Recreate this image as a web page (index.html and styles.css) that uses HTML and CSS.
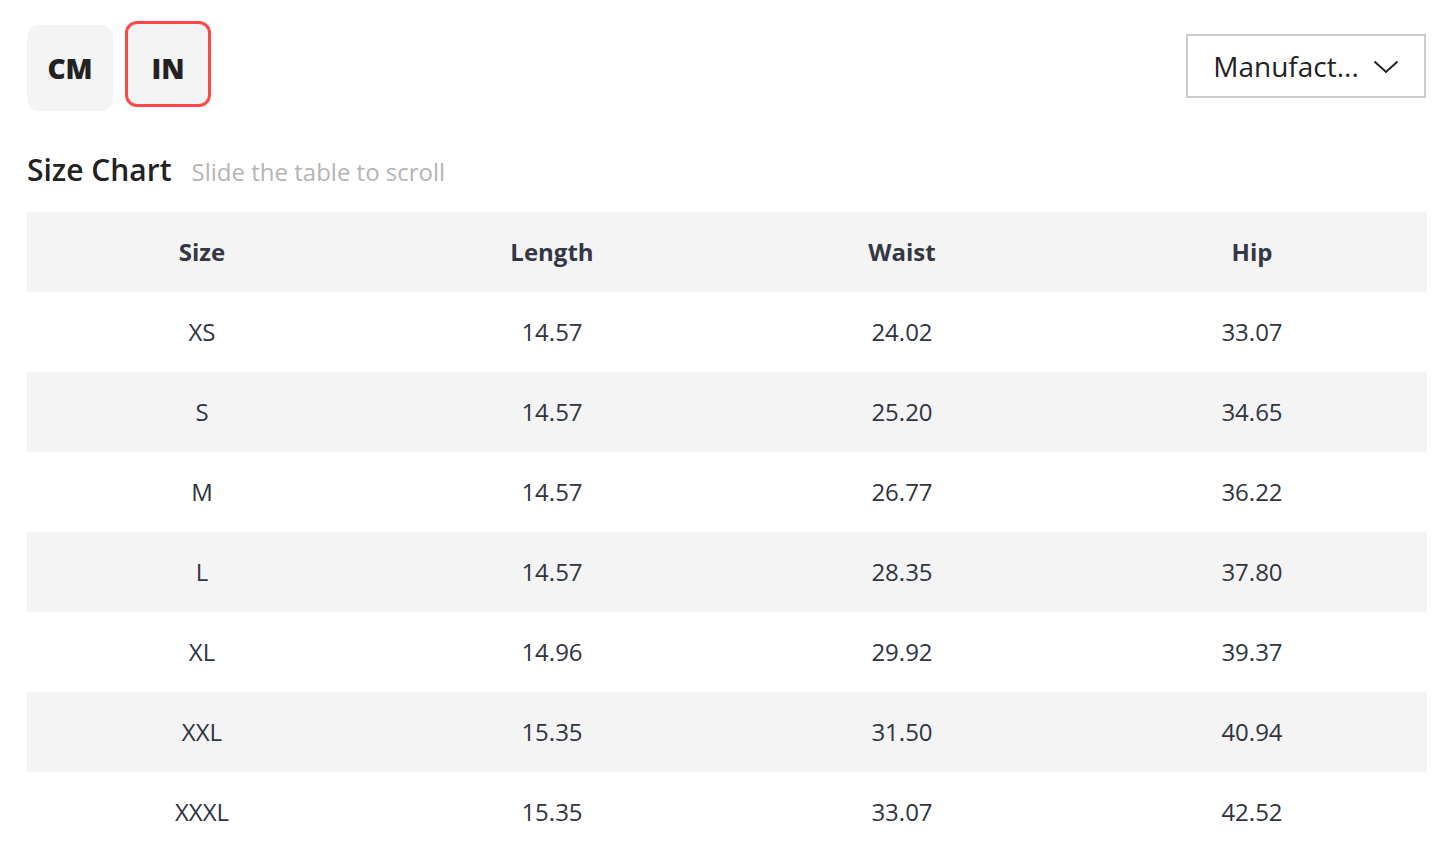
FILE: index.html
```html
<!DOCTYPE html>
<html>
<head>
<meta charset="utf-8">
<link rel="stylesheet" href="styles.css">
</head>
<body>
<div class="page">
  <div class="toolbar">
    <div class="units">
      <button class="unit">CM</button>
      <button class="unit active">IN</button>
    </div>
    <div class="select">
      <span class="select-text">Manufact...</span>
      <svg class="chev" width="26" height="14" viewBox="0 0 26 14"><path d="M1.5 1.5 L13 12 L24.5 1.5" fill="none" stroke="#222" stroke-width="2"/></svg>
    </div>
  </div>
  <div class="title-row">
    <h2 class="title">Size Chart</h2>
    <span class="hint">Slide the table to scroll</span>
  </div>
  <table class="chart">
    <thead>
      <tr><th>Size</th><th>Length</th><th>Waist</th><th>Hip</th></tr>
    </thead>
    <tbody>
      <tr><td>XS</td><td>14.57</td><td>24.02</td><td>33.07</td></tr>
      <tr><td>S</td><td>14.57</td><td>25.20</td><td>34.65</td></tr>
      <tr><td>M</td><td>14.57</td><td>26.77</td><td>36.22</td></tr>
      <tr><td>L</td><td>14.57</td><td>28.35</td><td>37.80</td></tr>
      <tr><td>XL</td><td>14.96</td><td>29.92</td><td>39.37</td></tr>
      <tr><td>XXL</td><td>15.35</td><td>31.50</td><td>40.94</td></tr>
      <tr><td>XXXL</td><td>15.35</td><td>33.07</td><td>42.52</td></tr>
    </tbody>
  </table>
</div>
</body>
</html>
```
FILE: styles.css
```css
* { box-sizing: border-box; }
html, body { margin: 0; padding: 0; background: #fff; }
body { font-family: "Open Sans", "Noto Sans", sans-serif; color: #2f3441; }
.page { padding: 25px 26px 0 27px; width: 1452px; }
.toolbar { display: flex; justify-content: space-between; align-items: flex-start; }
.units { display: flex; gap: 12px; align-items: flex-start; }
.unit {
  width: 86px; height: 86px; border-radius: 12px; background: #f4f4f4;
  border: 3px solid transparent; font-family: "Open Sans", sans-serif;
  font-size: 28px; font-weight: 800; color: #222; padding: 0; cursor: pointer;
}
.unit.active { border-color: #fc4a4a; margin-top: -4px; padding-top: 8px; }
.select {
  margin-top: 9px; width: 240px; height: 64px; border: 2px solid #cccccc;
  display: flex; align-items: center; justify-content: center; gap: 14px;
  padding-left: 0;
}
.select-text { font-size: 28px; color: #222; }
.chev { margin-top: 2px; }
.title-row { display: flex; align-items: baseline; gap: 20px; margin-top: 39px; height: 62px; }
.title { margin: 0; font-size: 30px; font-weight: 600; color: #222; line-height: 40px; }
.hint { font-size: 24px; color: #b4b4b4; }
.chart { width: 1400px; border-collapse: collapse; table-layout: fixed; }
.chart th, .chart td { height: 80px; text-align: center; padding: 0 0 2px; font-size: 24px; }
.chart th { font-weight: 700; color: #333745; background: #f4f4f4; }
.chart td { color: #2f3441; }
.chart tbody tr:nth-child(even) td { background: #f4f4f4; }
```
